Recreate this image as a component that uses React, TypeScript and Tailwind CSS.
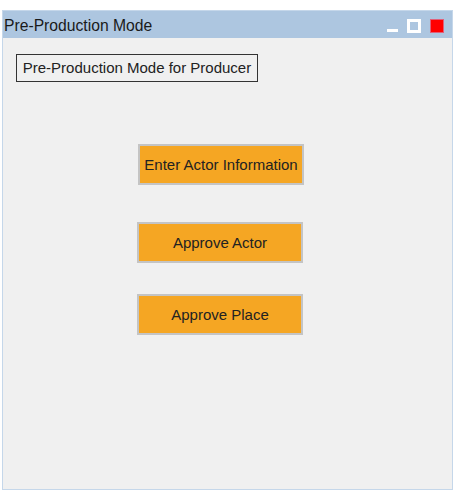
export default function App() {
  const btn =
    "w-[166px] h-[41px] bg-[#f5a623] border-2 border-[#c4c4c4] text-[15px] text-[#222] flex items-center justify-center pt-[2px]";
  return (
    <div className="w-[462px] h-[497px] bg-white font-['Liberation_Sans',Arial,sans-serif] pt-[10px] pl-[2px]">
      <div className="w-[451px] h-[480px] border border-[#c5d7ea] bg-[#f0f0f0] flex flex-col">
        <div className="h-[27px] bg-[#adc6e0] flex items-center justify-between pl-[1px] pr-[8px]">
          <span className="text-[15.7px] text-[#1a1a1a] pt-[2px]">Pre-Production Mode</span>
          <div className="flex items-center gap-[9px] pt-[2px]">
            <div className="w-[11px] h-[3px] bg-white mt-[9px]" />
            <div className="w-[14px] h-[14px] border-[3px] border-white bg-[#adc6e0]" />
            <div className="w-[14px] h-[14px] bg-[#ff0000] border border-[#e0607a]" />
          </div>
        </div>
        <div className="flex flex-col items-start">
          <div className="ml-[13px] mt-[16px] h-[28px] w-[242px] border border-[#333] text-[15px] text-[#222] flex items-center justify-center">
            Pre-Production Mode for Producer
          </div>
          <div className={`${btn} ml-[135px] mt-[62px]`}>Enter Actor Information</div>
          <div className={`${btn} ml-[134px] mt-[37px]`}>Approve Actor</div>
          <div className={`${btn} ml-[134px] mt-[31px]`}>Approve Place</div>
        </div>
      </div>
    </div>
  );
}
